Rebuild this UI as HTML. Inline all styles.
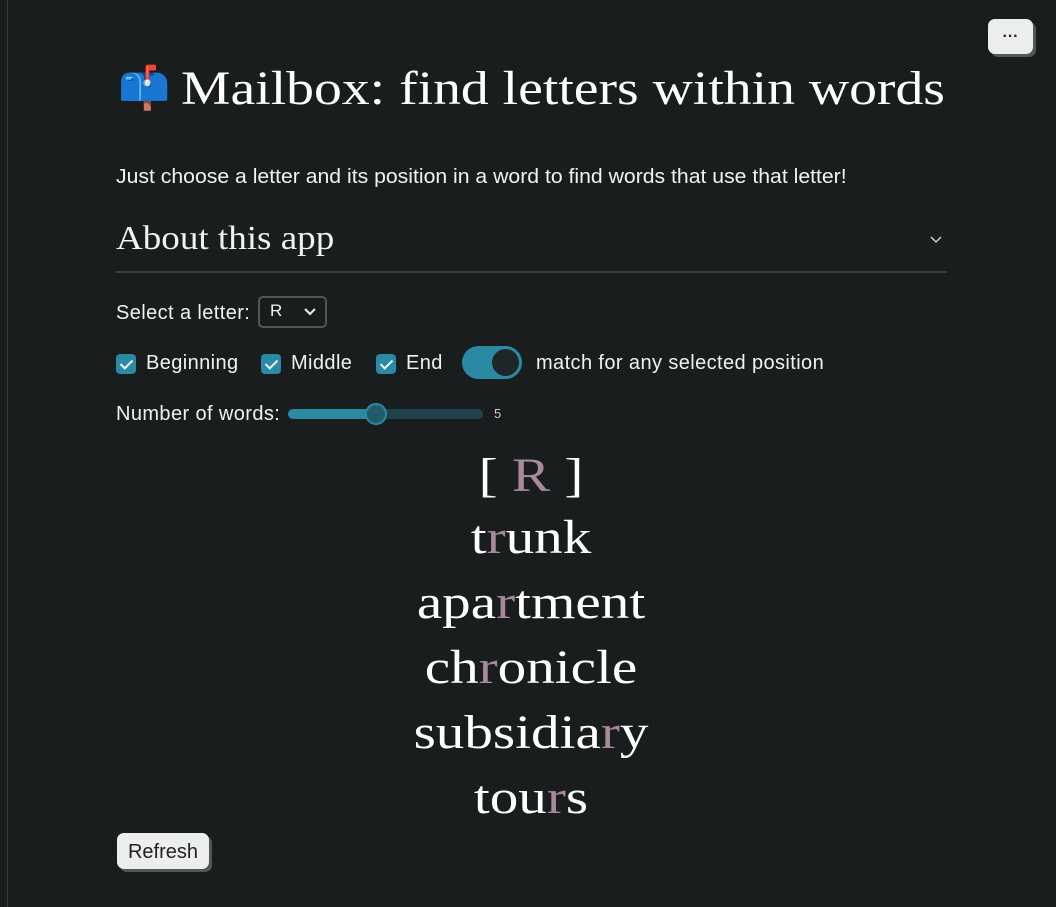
<!DOCTYPE html>
<html><head><meta charset="utf-8"><style>
*{margin:0;padding:0;box-sizing:border-box}
body{width:1056px;height:907px;background:#1a1d1d;color:#f2f2f2;font-family:"Liberation Sans",sans-serif;position:relative;overflow:hidden}
.edge{position:absolute;left:7px;top:0;width:1px;height:907px;background:#3a3d3e}
.abs{position:absolute;white-space:nowrap;transform-origin:left top}
.serif{font-family:"Liberation Serif",serif}
.lbl{font-size:20px;letter-spacing:0.4px}
.menu{position:absolute;left:988px;top:19px;width:45px;height:35px;background:#eceeee;border-radius:7px;box-shadow:3px 3px 0 #555;color:#222;text-align:center;font-size:16px;line-height:35px;font-weight:bold}
.cb{display:inline-block;width:20px;height:20px;background:#2a8aa4;border-radius:4px;position:absolute}
.cb:after{content:"";position:absolute;left:7px;top:3px;width:5px;height:10px;border:solid #e8f4f8;border-width:0 2px 2px 0;transform:rotate(45deg)}
.words{position:absolute;left:331px;width:400px;text-align:center;font-family:"Liberation Serif",serif;font-size:48px;color:#fff;transform:scaleX(1.19)}
.h{color:#a8899a}
</style></head><body>
<div class="edge"></div>
<div class="menu">···</div>
<div class="abs" style="left:118px;top:64px;font-size:42px">📫</div>
<div class="abs serif" style="left:181px;top:61px;font-size:48px;color:#fff;transform:scaleX(1.16)">Mailbox: find letters within words</div>
<div class="abs" style="left:116px;top:166px;font-size:20px;transform:scaleX(1.06)">Just choose a letter and its position in a word to find words that use that letter!</div>
<div class="abs serif" style="left:116px;top:220px;font-size:34px;transform:scaleX(1.09)">About this app</div>
<svg style="position:absolute;left:929px;top:235px" width="14" height="10"><path d="M2 2 L7 7 L12 2" stroke="#ccc" stroke-width="1.5" fill="none"/></svg>
<div style="position:absolute;left:116px;top:271px;width:831px;height:2px;background:#3c3f40"></div>
<div class="abs lbl" style="left:116px;top:302px">Select a letter:</div>
<div style="position:absolute;left:258px;top:296px;width:69px;height:32px;border:2px solid #555;border-radius:5px"></div>
<div class="abs" style="left:270px;top:301px;font-size:17px">R</div>
<svg style="position:absolute;left:303px;top:307px" width="14" height="10"><path d="M2 2 L7 7 L12 2" stroke="#eee" stroke-width="2" fill="none"/></svg>
<span class="cb" style="left:116px;top:354px"></span><div class="abs lbl" style="left:146px;top:352px">Beginning</div>
<span class="cb" style="left:261px;top:354px"></span><div class="abs lbl" style="left:291px;top:352px">Middle</div>
<span class="cb" style="left:376px;top:354px"></span><div class="abs lbl" style="left:406px;top:352px">End</div>
<div style="position:absolute;left:462px;top:346px;width:60px;height:33px;background:#2a8aa4;border-radius:17px"></div>
<div style="position:absolute;left:492px;top:349px;width:27px;height:27px;background:#1f2628;border-radius:50%"></div>
<div class="abs lbl" style="left:536px;top:352px">match for any selected position</div>
<div class="abs lbl" style="left:116px;top:403px">Number of words:</div>
<div style="position:absolute;left:288px;top:409px;width:195px;height:10px;background:#1f434d;border-radius:5px"></div>
<div style="position:absolute;left:288px;top:409px;width:88px;height:10px;background:#2a8aa4;border-radius:5px"></div>
<div style="position:absolute;left:365px;top:403px;width:22px;height:22px;background:#215a69;border:2px solid #2a8aa4;border-radius:50%"></div>
<div class="abs" style="left:494px;top:406px;font-size:13px;color:#ccc">5</div>
<div class="words" style="top:448px;font-weight:300">[ <span class="h">R</span> ]</div>
<div class="words" style="top:510px">t<span class="h">r</span>unk</div>
<div class="words" style="top:575px">apa<span class="h">r</span>tment</div>
<div class="words" style="top:640px">ch<span class="h">r</span>onicle</div>
<div class="words" style="top:705px">subsidia<span class="h">r</span>y</div>
<div class="words" style="top:770px">tou<span class="h">r</span>s</div>
<div style="position:absolute;left:117px;top:833px;width:92px;height:36px;background:#eceeee;border-radius:7px;box-shadow:3px 3px 0 #555;color:#222;font-size:20px;text-align:center;line-height:38px">Refresh</div>
</body></html>
